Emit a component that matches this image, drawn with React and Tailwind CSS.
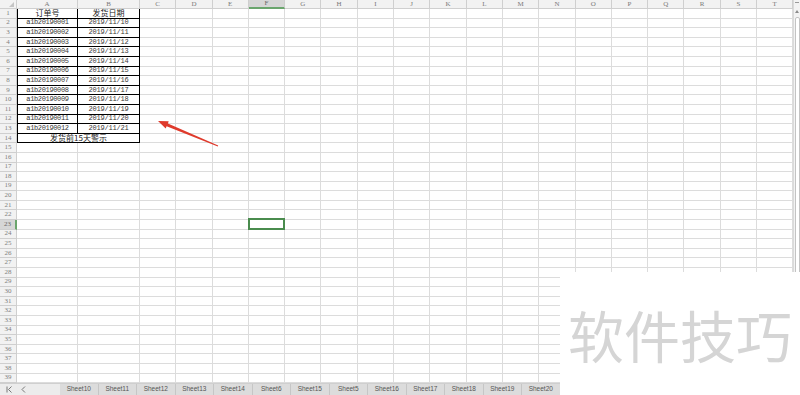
import React from 'react';

const COLS = ['C', 'D', 'E', 'F', 'G', 'H', 'I', 'J', 'K', 'L', 'M', 'N', 'O', 'P', 'Q', 'R', 'S', 'T'];
const ROW_COUNT = 39;
const SHEETS = ['Sheet10', 'Sheet11', 'Sheet12', 'Sheet13', 'Sheet14', 'Sheet6', 'Sheet15', 'Sheet5', 'Sheet16', 'Sheet17', 'Sheet18', 'Sheet19', 'Sheet20'];

const ORDERS = Array.from({ length: 12 }, (_, i) => ({
  id: `a1b2019${String(i + 1).padStart(4, '0')}`,
  date: `2019/11/${10 + i}`,
}));

const cellFont = { fontFamily: '"Liberation Mono", "Noto Sans CJK SC", monospace' };
const cjkFont = { fontFamily: '"Noto Sans CJK SC", sans-serif' };
const headFont = { fontFamily: '"Liberation Serif", "Noto Sans CJK SC", serif' };

function HeaderRow() {
  return (
    <div className="flex h-[9px] shrink-0 bg-[#f2f2f2]" style={headFont}>
      <div className="relative w-[17px] shrink-0 border-r border-b border-[#cfcfcf]">
        <div className="absolute right-[2px] bottom-[1px] h-0 w-0 border-l-[5px] border-t-[5px] border-l-transparent border-t-transparent border-b-0 border-r-[5px] border-r-[#c4c4c4]" />
      </div>
      <div className="flex w-[61px] shrink-0 items-center justify-center border-r border-b border-[#cfcfcf] text-[7px] leading-none text-[#7a7a7a]">A</div>
      <div className="flex w-[62px] shrink-0 items-center justify-center border-r border-b border-[#cfcfcf] text-[7px] leading-none text-[#7a7a7a]">B</div>
      {COLS.map((c) =>
        c === 'F' ? (
          <div key={c} className="flex w-[36.3px] shrink-0 items-center justify-center border-r border-[#cfcfcf] border-b-2 border-b-[#6aa56d] bg-[#d6d6d6] text-[7px] leading-none text-[#6a6a6a]">{c}</div>
        ) : (
          <div key={c} className="flex w-[36.3px] shrink-0 items-center justify-center border-r border-b border-[#cfcfcf] text-[7px] leading-none text-[#7a7a7a]">{c}</div>
        )
      )}
    </div>
  );
}

function RowHeader({ n }) {
  return n === 23 ? (
    <div className="flex w-[17px] shrink-0 items-center justify-center border-r-2 border-b border-[#cfcfcf] border-r-[#6aa56d] bg-[#d6d6d6] text-[7px] leading-none text-[#6a6a6a]" style={headFont}>{n}</div>
  ) : (
    <div className="flex w-[17px] shrink-0 items-center justify-center border-r border-b border-[#cfcfcf] bg-[#f2f2f2] text-[7px] leading-none text-[#808080]" style={headFont}>{n}</div>
  );
}

function TableCells({ n }) {
  if (n === 1) {
    return (
      <>
        <div className="flex w-[61px] shrink-0 items-center justify-center border-l border-r border-b border-black text-[8px] leading-none text-[#222]" style={cjkFont}>订单号</div>
        <div className="flex w-[62px] shrink-0 items-center justify-center border-r border-b border-black text-[8px] leading-none text-[#222]" style={cjkFont}>发货日期</div>
      </>
    );
  }
  if (n <= 13) {
    const o = ORDERS[n - 2];
    return (
      <>
        <div className="flex w-[61px] shrink-0 items-center justify-center border-l border-r border-b border-black text-[7px] leading-none tracking-[-0.35px] text-[#3a3a3a]" style={cellFont}>{o.id}</div>
        <div className="flex w-[62px] shrink-0 items-center justify-center border-r border-b border-black text-[7px] leading-none tracking-[-0.2px] text-[#3a3a3a]" style={cellFont}>{o.date}</div>
      </>
    );
  }
  if (n === 14) {
    return (
      <div className="flex w-[123px] shrink-0 items-center justify-center border-l border-r border-b border-black text-[8px] leading-none text-[#222]" style={cjkFont}>发货前15天警示</div>
    );
  }
  return (
    <>
      <div className="w-[61px] shrink-0 border-r border-b border-[#dcdcdc]" />
      <div className="w-[62px] shrink-0 border-r border-b border-[#dcdcdc]" />
    </>
  );
}

function SheetRow({ n }) {
  return (
    <div className="flex h-[9.6px] shrink-0">
      <RowHeader n={n} />
      <TableCells n={n} />
      {COLS.map((c) =>
        c === 'F' && n === 23 ? (
          <div key={c} className="relative w-[36.3px] shrink-0 border-r border-b border-[#dcdcdc]">
            <div className="absolute -top-[2px] -left-[1px] -right-[1px] -bottom-[1px] border-2 border-[#4a8c4e]" />
          </div>
        ) : (
          <div key={c} className="w-[36.3px] shrink-0 border-r border-b border-[#dcdcdc]" />
        )
      )}
    </div>
  );
}

function Arrow() {
  return (
    <svg className="pointer-events-none absolute left-0 top-0" width="800" height="395" viewBox="0 0 800 395">
      <polygon
        points="158,121 168.7,121.2 167.9,123.6 218.2,145.6 217.8,146.4 166.6,126.2 165.7,128.5"
        fill="#df3a2c"
      />
    </svg>
  );
}

function Scrollbar() {
  return (
    <div className="flex flex-1 flex-col items-center border-l border-[#dadada] bg-[#f3f3f3]">
      <div className="mt-[2px] h-px w-[4px] bg-[#9a9a9a]" />
      <div className="mt-[7px] h-0 w-0 border-x-[2px] border-b-[3px] border-x-transparent border-b-[#8a8a8a]" />
      <div className="mt-[4px] w-[5px] flex-1 rounded-[2px] border border-[#c3c3c3] bg-white" />
    </div>
  );
}

function TabBar() {
  return (
    <div className="flex h-[12px] shrink-0 border-t border-[#cfcfcf] bg-[#ececec]">
      <div className="flex w-[60px] shrink-0 items-center gap-[8px] pl-[6px]">
        <svg width="7" height="7" viewBox="0 0 7 7">
          <path d="M1 0.5V6.5M5.5 0.5L2.5 3.5L5.5 6.5" stroke="#6b6b6b" strokeWidth="0.9" fill="none" />
        </svg>
        <svg width="5" height="7" viewBox="0 0 5 7">
          <path d="M4 0.5L1 3.5L4 6.5" stroke="#6b6b6b" strokeWidth="0.9" fill="none" />
        </svg>
      </div>
      {SHEETS.map((s) => (
        <div
          key={s}
          className="flex w-[38.5px] shrink-0 items-center justify-center border-r border-[#c6c6c6] bg-[#dcdcdc] text-[6.5px] leading-none text-[#555]"
          style={{ fontFamily: '"Liberation Sans", sans-serif' }}
        >
          {s}
        </div>
      ))}
    </div>
  );
}

export default function App() {
  return (
    <div className="relative flex h-[395px] w-[800px] flex-col overflow-hidden bg-white">
      <div className="flex h-[383px] shrink-0">
        <div className="flex w-[793.4px] shrink-0 flex-col">
          <HeaderRow />
          {Array.from({ length: ROW_COUNT }, (_, i) => (
            <SheetRow key={i} n={i + 1} />
          ))}
        </div>
        <Scrollbar />
      </div>
      <TabBar />
      <Arrow />
      <div className="absolute left-[560px] top-[272px] right-0 bottom-0 flex items-center justify-center bg-white">
        <span className="text-[56px] leading-none text-[#d5d5d5]" style={cjkFont}>软件技巧</span>
      </div>
    </div>
  );
}
